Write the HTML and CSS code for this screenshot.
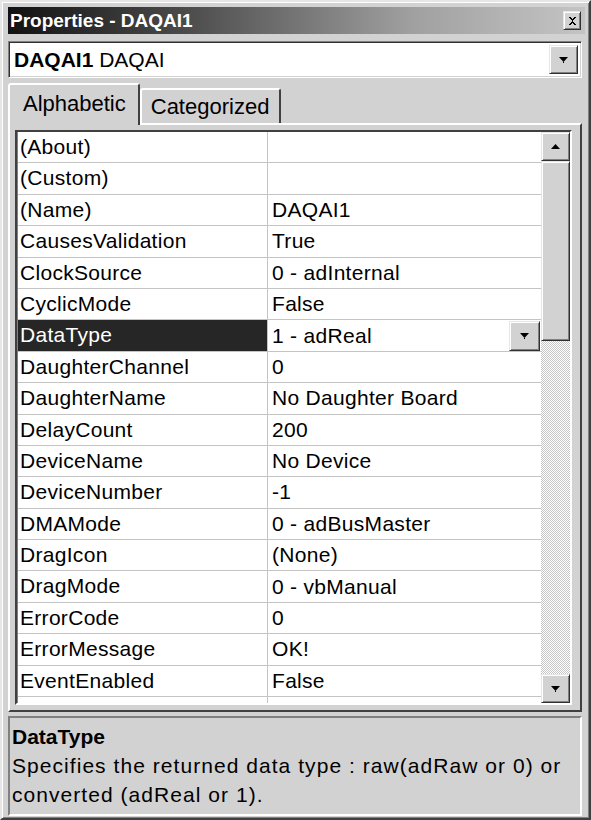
FILE: index.html
```html
<!DOCTYPE html>
<html>
<head>
<meta charset="utf-8">
<link rel="stylesheet" href="styles.css">
</head>
<body>
<div class="window">
  <div class="titlebar">
    <span class="title">Properties - DAQAI1</span>
    <span class="close btn3d">
      <svg width="9" height="8" viewBox="0 0 9 8"><path d="M1 0h2v1h1v1h1V1h1V0h2v1H7v1H6v1H5v2h1v1h1v1h1v1H6V7H5V6H4v1H3v1H1V7h1V6h1V5h1V3H3V2H2V1H1z" fill="#000"/></svg>
    </span>
  </div>

  <div class="combo sunken">
    <span class="combo-text"><b>DAQAI1</b> DAQAI</span>
    <span class="combo-btn btn3d">
      <svg width="9" height="6" viewBox="0 0 9 6"><path d="M0 0h9L4.5 5z M4 5h1v1H4z" fill="#000"/></svg>
    </span>
  </div>

  <div class="tabstrip">
    <div class="tab active">Alphabetic</div>
    <div class="tab">Categorized</div>
  </div>

  <div class="tabpage">
    <div class="grid sunken">
      <div class="rows">
        <div class="row"><div class="name">(About)</div><div class="value"></div></div>
        <div class="row"><div class="name">(Custom)</div><div class="value"></div></div>
        <div class="row"><div class="name">(Name)</div><div class="value">DAQAI1</div></div>
        <div class="row"><div class="name">CausesValidation</div><div class="value">True</div></div>
        <div class="row"><div class="name">ClockSource</div><div class="value">0 - adInternal</div></div>
        <div class="row"><div class="name">CyclicMode</div><div class="value">False</div></div>
        <div class="row selected"><div class="name">DataType</div><div class="value">1 - adReal<span class="cell-btn btn3d"><svg width="9" height="6" viewBox="0 0 9 6"><path d="M0 0h9L4.5 5z M4 5h1v1H4z" fill="#000"/></svg></span></div></div>
        <div class="row"><div class="name">DaughterChannel</div><div class="value">0</div></div>
        <div class="row"><div class="name">DaughterName</div><div class="value">No Daughter Board</div></div>
        <div class="row"><div class="name">DelayCount</div><div class="value">200</div></div>
        <div class="row"><div class="name">DeviceName</div><div class="value">No Device</div></div>
        <div class="row"><div class="name">DeviceNumber</div><div class="value">-1</div></div>
        <div class="row"><div class="name">DMAMode</div><div class="value">0 - adBusMaster</div></div>
        <div class="row"><div class="name">DragIcon</div><div class="value">(None)</div></div>
        <div class="row"><div class="name">DragMode</div><div class="value">0 - vbManual</div></div>
        <div class="row"><div class="name">ErrorCode</div><div class="value">0</div></div>
        <div class="row"><div class="name">ErrorMessage</div><div class="value">OK!</div></div>
        <div class="row"><div class="name">EventEnabled</div><div class="value">False</div></div>
        <div class="row"><div class="name"></div><div class="value"></div></div>
      </div>
      <div class="vscroll">
        <div class="sb-btn btn3d">
          <svg width="9" height="5" viewBox="0 0 9 5"><path d="M4.5 0L9 5H0z" fill="#000"/></svg>
        </div>
        <div class="sb-thumb btn3d"></div>
        <div class="sb-track"></div>
        <div class="sb-btn btn3d">
          <svg width="9" height="6" viewBox="0 0 9 6"><path d="M0 0h9L4.5 5z M4 5h1v1H4z" fill="#000"/></svg>
        </div>
      </div>
    </div>
  </div>

  <div class="desc sunken">
    <div class="desc-title">DataType</div>
    <div class="desc-text">Specifies the returned data type : raw(adRaw or 0) or converted (adReal or 1).</div>
  </div>
</div>
</body>
</html>
```

FILE: styles.css
```css
* { box-sizing: border-box; }

body {
  margin: 0;
  background: #d2d2d2;
  font-family: "Liberation Sans", Arial, sans-serif;
  color: #000;
}

.window {
  width: 591px;
  height: 820px;
  background: #d2d2d2;
  border-top: 2px solid #e6e6e6;
  border-left: 2px solid #e6e6e6;
  border-right: 2px solid #404040;
  border-bottom: 2px solid #404040;
  box-shadow: inset 1px 1px #fff, inset -1px -1px #808080;
  padding: 5px 4px 0 6px;
  display: flex;
  flex-direction: column;
  overflow: hidden;
}

.btn3d {
  background: #d2d2d2;
  border: 1px solid;
  border-color: #e6e6e6 #303030 #303030 #e6e6e6;
  box-shadow: inset 1px 1px #fff, inset -1px -1px #808080;
  display: flex;
  align-items: center;
  justify-content: center;
}

.sunken {
  border: 1px solid;
  border-color: #808080 #fff #fff #808080;
  box-shadow: inset 1px 1px #303030, inset -1px -1px #d2d2d2;
}

/* title bar */
.titlebar {
  height: 27px;
  background: linear-gradient(to right, #121212 0%, #4a4a4a 30%, #a0a0a0 70%, #c4c4c4 100%);
  display: flex;
  align-items: center;
  justify-content: space-between;
  padding: 0 4px 0 2px;
}
.title {
  color: #fff;
  font-weight: bold;
  font-size: 19px;
}
.close {
  width: 18px;
  height: 19px;
}

/* combo box */
.combo {
  margin-top: 7px;
  margin-right: 3px;
  height: 37px;
  background: #fff;
  display: flex;
  align-items: center;
  justify-content: space-between;
  padding: 2px 3px 2px 4px;
}
.combo-text {
  font-size: 21px;
  padding-left: 1px;
}
.combo-btn {
  width: 29px;
  height: 29px;
}

/* tabs */
.tabstrip {
  margin-top: 5px;
  height: 40px;
  display: flex;
  align-items: flex-end;
  padding-left: 0;
  position: relative;
  z-index: 1;
}
.tab {
  font-size: 22px;
  height: 35px;
  padding: 4px 10px 0 9px;
  border: 2px solid;
  border-bottom: none;
  border-color: #fff #404040 transparent #fff;
  border-radius: 3px 3px 0 0;
  background: #d2d2d2;
}
.tab.active {
  height: 42px;
  margin-bottom: -2px;
  padding: 6px 12px 0 13px;
}

.tabpage {
  height: 589px;
  margin-right: 3px;
  border: 2px solid;
  border-color: #fff #404040 #404040 #fff;
  padding: 5px 8px 5px 5px;
  display: flex;
}

/* property grid */
.grid {
  flex: 1;
  display: flex;
  border-width: 2px;
  box-shadow: none;
  border-color: #404040 #fff #fff #404040;
  background: #fff;
  overflow: hidden;
}
.rows {
  flex: 1;
  overflow: hidden;
  border-left: 1px solid #808080;
}
.row {
  height: 31.4px;
  display: grid;
  grid-template-columns: 250px 1fr;
  border-bottom: 1px solid #c4c4c4;
  font-size: 21px;
  line-height: 30px;
  letter-spacing: 0.3px;
}
.name {
  padding-left: 2px;
  border-right: 1px solid #c4c4c4;
  white-space: nowrap;
  overflow: hidden;
}
.value {
  padding-left: 4px;
  white-space: nowrap;
  display: flex;
  align-items: center;
  justify-content: space-between;
}
.row.selected .name {
  background: #262626;
  color: #fff;
}
.cell-btn {
  width: 31px;
  height: 30px;
  margin-right: 1px;
}

/* scrollbar */
.vscroll {
  width: 29px;
  display: flex;
  flex-direction: column;
  background: #d2d2d2;
}
.sb-btn {
  height: 29px;
}
.sb-thumb {
  height: 180px;
}
.sb-track {
  flex: 1;
  background: repeating-conic-gradient(#fff 0 25%, #c6c6c6 0 50%) 0 0 / 2px 2px;
}

/* description */
.desc {
  margin-top: 4px;
  margin-right: 3px;
  height: 100px;
  border-width: 2px;
  border-color: #808080 #fff #fff #808080;
  box-shadow: none;
  padding: 4px 4px 0 2px;
  font-size: 21px;
  line-height: 29px;
}
.desc-title {
  font-weight: bold;
}
.desc-text {
  letter-spacing: 1.05px;
}
```
